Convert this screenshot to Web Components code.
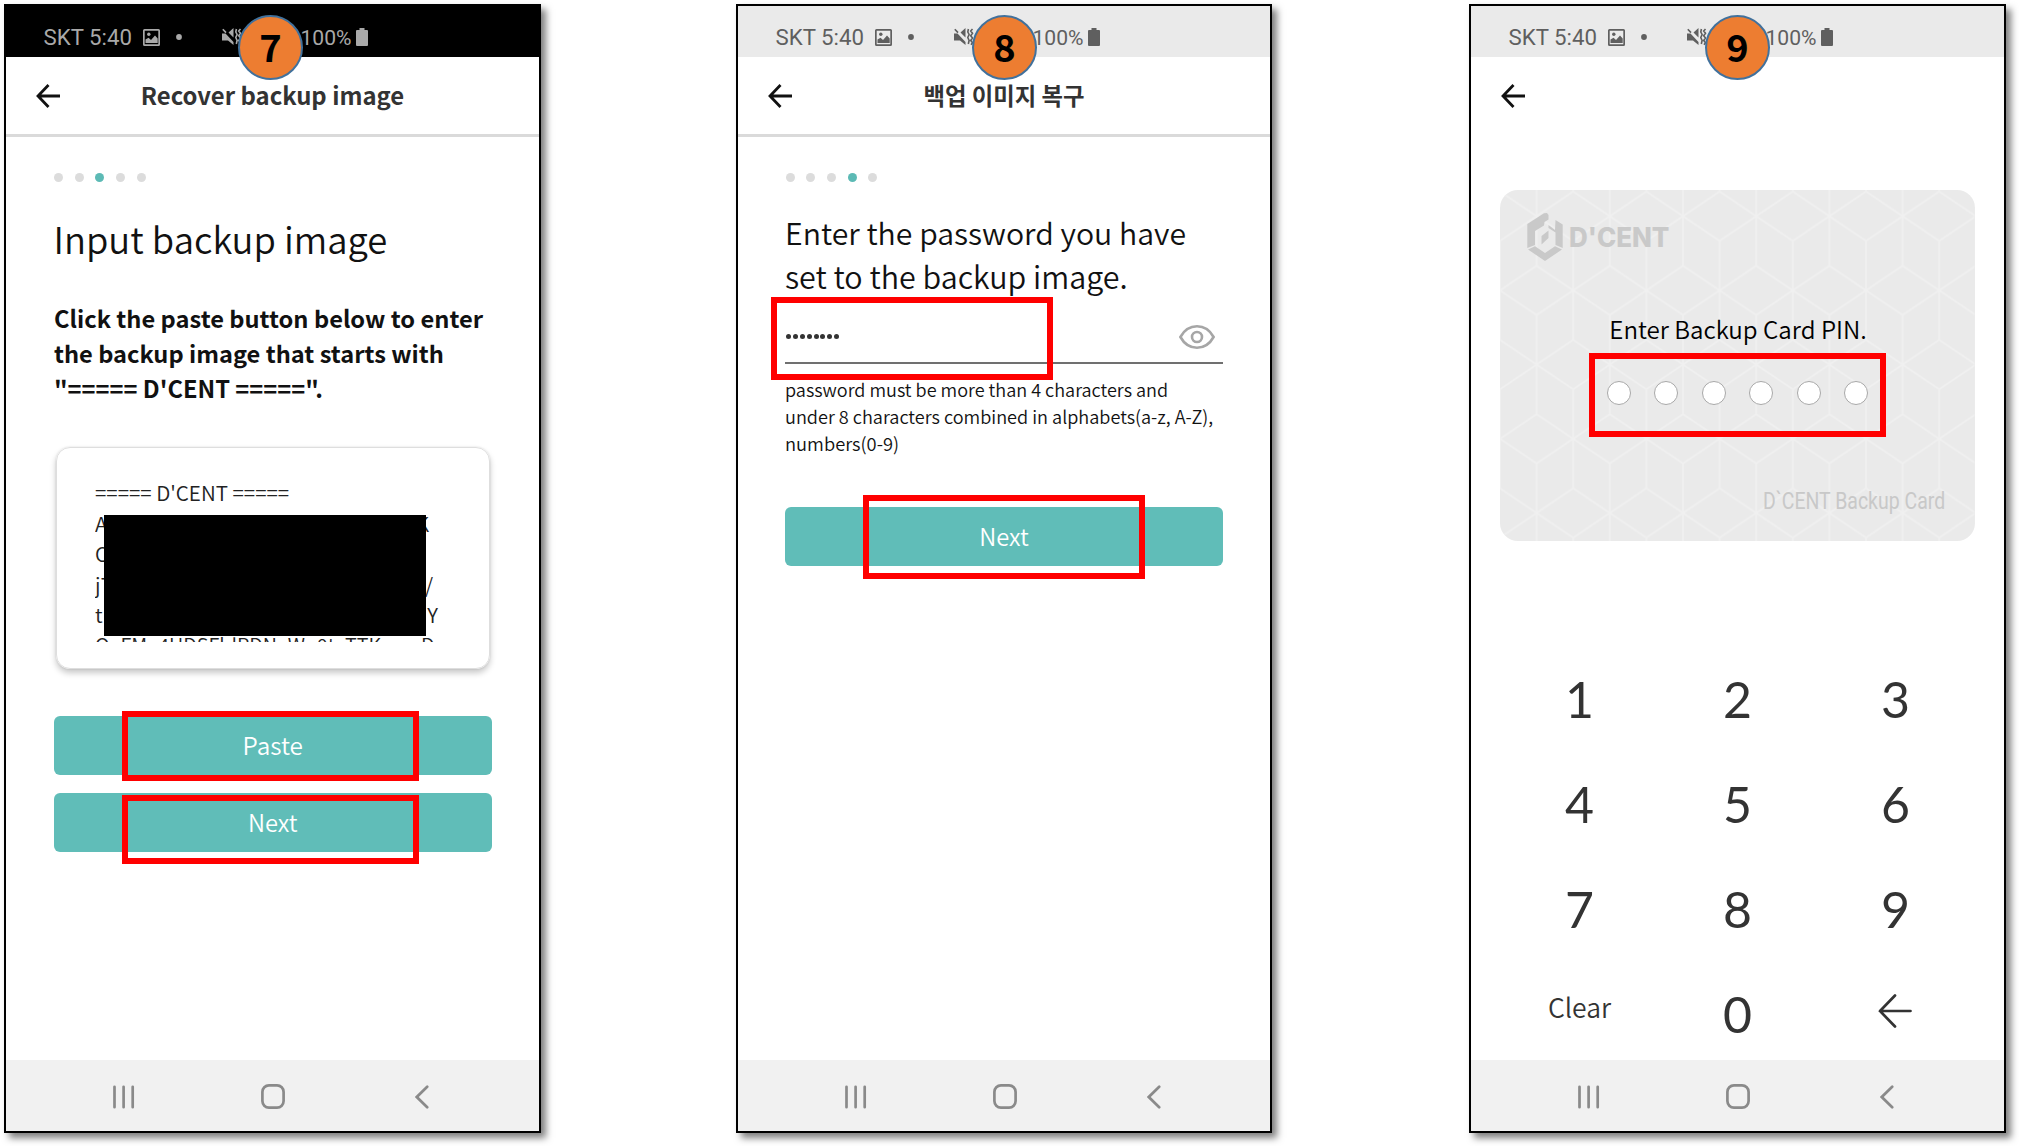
<!DOCTYPE html>
<html lang="en">
<head>
<meta charset="utf-8">
<title>Backup recovery steps 7-9</title>
<style>
  html, body { margin: 0; background: #fff; }
  body { width: 2019px; height: 1146px; overflow: hidden; font-family: "Noto Sans CJK KR", sans-serif; color: #111; }
</style>
</head>
<body>
<step-board></step-board>
<script>
const CJK = '"Noto Sans CJK KR", sans-serif';
const define = (name, html, setup) => {
  const template = document.createElement('template');
  template.innerHTML = html.trim();
  customElements.define(name, class extends HTMLElement {
    connectedCallback() {
      if (this.shadowRoot) return;
      this.attachShadow({ mode: 'open' }).append(template.content.cloneNode(true));
      if (setup) setup.call(this, this.shadowRoot);
    }
  });
};

/* One line of text, sized so that its ink spans `w` pixels.
   With `stretch`, the font size is kept and the line is scaled sideways. */
const ctx = document.createElement('canvas').getContext('2d');
define('text-line', `<style>
    :host { display: block; white-space: nowrap; }
    span { display: block; width: max-content; transform-origin: var(--origin, left) center; }
  </style><span><slot></slot></span>`, function (root) {
  const w = +this.getAttribute('w');
  if (!w) return;
  const cs = getComputedStyle(this);
  const base = parseFloat(cs.fontSize);
  ctx.font = `${cs.fontWeight} ${base}px ${cs.fontFamily}`;
  const m = ctx.measureText(this.textContent);
  const ratio = w / (m.actualBoundingBoxRight + m.actualBoundingBoxLeft);
  if (this.hasAttribute('stretch')) root.querySelector('span').style.transform = `scaleX(${ratio})`;
  else this.style.fontSize = base * ratio + 'px';
});

define('status-bar', `
  <style>
    :host { display: flex; align-items: center; box-sizing: border-box; height: 51px; padding: 11px 0 0 37.500px;
      background: #eaeaea; color: #5f5f5f; font-family: Roboto, sans-serif; }
    :host([dark]) { background: #000; color: #a9a9a9; }
    text-line { font-size: 22px; line-height: 41px; }
    .time { width: 99px; }
    svg { display: block; fill: currentColor; }
    .mute { margin-left: 40px; }
    .pct { margin-left: 58.500px; width: 55px; }
  </style>
  <text-line class="time" w="88.500">SKT 5:40</text-line>
  <svg width="17" height="17" viewBox="0 0 17 17"><path fill-rule="evenodd" d="M1.500 0h14A1.500 1.500 0 0 1 17 1.500v14a1.500 1.500 0 0 1-1.500 1.500h-14A1.500 1.500 0 0 1 0 15.500v-14A1.500 1.500 0 0 1 1.500 0zM1.700 1.700v13.600h13.600V1.700z"/><path d="M2.500 14V10.500L5.500 8.800 8 11l4-4.500 2.700 3V14z"/><circle cx="5.800" cy="5.200" r="1.700"/></svg>
  <svg width="6" height="6" viewBox="0 0 6 6" style="margin-left:16.500px"><circle cx="3" cy="3" r="2.900"/></svg>
  <svg class="mute" width="20" height="18" viewBox="0 0 20 18"><path d="M0 5.500h3.500L11.500 14v3L6 12.500H0zM6.500 4.500 11.500 0v9.500z"/><path d="M.8 1.200 4 4.600M18.500 1l-1.800 2 1.800 2.300-1.800 2.400L18.500 10l-1.800 2.400 1.800 2.300-1.500 2M14.400 1l-.6 3 1.300 2.500-1.300 3 1.300 3-.8 3.500" fill="none" stroke="currentColor" stroke-width="1.600"/></svg>
  <text-line class="pct" w="50">100%</text-line>
  <svg width="12" height="18" viewBox="0 0 12 18"><path d="M3.500 0h5v2H11a1 1 0 0 1 1 1v14a1 1 0 0 1-1 1H1a1 1 0 0 1-1-1V3a1 1 0 0 1 1-1h2.500z"/></svg>
`);

define('app-header', `
  <style>
    :host { display: grid; grid-template-columns: 80px 1fr 80px; align-items: center; box-sizing: border-box;
      height: 80px; border-bottom: 3px solid transparent; color: #333; }
    :host([ruled]) { border-color: #dadada; }
    svg { margin-left: 29.500px; display: block; }
    .t { display: flex; justify-content: center; font: bold 23px/76px ${CJK}; padding-bottom: 2px; }
  </style>
  <svg width="24" height="24" viewBox="0 0 24 24" fill="none" stroke="#111" stroke-width="2.800"><path d="M12.500 1 2 12l10.500 11M2 12h22"/></svg>
  <div class="t"><slot></slot></div>
`);

define('step-dots', `
  <style>
    :host { display: flex; gap: 11.700px; height: 9px; padding-left: .5px; }
    i { width: 9px; height: 9px; border-radius: 50%; background: #dcdcdc; }
    i.on { background: #5cbab5; }
  </style>`, function (root) {
  for (let n = 1; n <= 5; n++) {
    const dot = document.createElement('i');
    if (n === +this.getAttribute('current')) dot.className = 'on';
    root.append(dot);
  }
});

define('app-button', `
  <style>
    :host { display: flex; justify-content: center; height: 59px; border-radius: 6px; background: #60bdb8;
      color: #fff; font: 350 23px/57px ${CJK}; }
  </style><slot></slot>`);

define('nav-bar', `
  <style>
    :host { display: flex; align-items: center; box-sizing: border-box; height: 71px; background: #f1f1f1; padding: 2px 0 0 107px; }
    svg { display: block; fill: none; stroke: #8a8a8a; stroke-width: 2.700; stroke-linecap: round; }
  </style>
  <svg width="22" height="24" viewBox="0 0 22 24"><path d="M1.500 1.800v20.400M10.600 1.800v20.400M19.700 1.800v20.400"/></svg>
  <svg width="24" height="25" viewBox="0 0 24 25" style="margin-left:125.500px"><rect x="1.400" y="1.400" width="21.200" height="22.200" rx="6.500"/></svg>
  <svg width="14" height="24" viewBox="0 0 14 24" style="margin-left:130px"><path d="M12.200 1.800 1.800 12l10.400 10.200"/></svg>
`);

/* Numbered badge over the status bar. */
define('step-badge', `
  <style>
    :host { position: absolute; top: 9px; width: 65px; height: 65px; box-sizing: border-box; border: 2px solid #41719c;
      border-radius: 50%; background: #ed7d31; color: #000; text-align: center; font: bold 38px/58px ${CJK}; }
  </style><slot></slot>`);

/* Red annotation frame over the screen. */
define('mark-box', `
  <style>:host { position: absolute; box-sizing: border-box; border: 6px solid #f00; }</style>`, function () {
  const [x, y, w, h] = this.getAttribute('box').split(' ');
  Object.assign(this.style, { left: x + 'px', top: y + 'px', width: w + 'px', height: h + 'px' });
});

define('phone-frame', `
  <style>
    :host { position: relative; display: flex; flex-direction: column; box-sizing: border-box; height: 1129px;
      border: 2px solid #000; background: #fff; box-shadow: 5px 5px 7px rgba(0,0,0,.5); }
    main { flex: 1; min-height: 0; }
  </style>
  <slot name="status"></slot><slot name="header"></slot>
  <main><slot></slot></main>
  <nav-bar></nav-bar><slot name="over"></slot>`);

define('import-screen', `
  <style>
    :host { display: block; padding: 36px 47px 0 47.500px; }
    h1, p { margin: 0; }
    h1 { margin-top: 31px; font: 350 35px/50px ${CJK}; }
    p { margin-top: 38px; padding-left: .5px; font: bold 23.500px/35px ${CJK}; }
    .card { box-sizing: border-box; position: relative; margin: 41px 2px 0; height: 222px; border: 1.500px solid #dedede; border-radius: 14px;
      box-shadow: 0 4px 6px rgba(0,0,0,.22), 0 0 2px rgba(0,0,0,.12); padding: 29px 50px 0 38.500px; }
    .data { height: 165px; overflow: hidden; font: 350 20.500px/30.500px ${CJK}; color: #222; }
    .row { display: flex; justify-content: space-between; height: 30.500px; }
    .mask { position: absolute; left: 47.500px; top: 67px; width: 322px; height: 121px; background: #000; }
    app-button { margin-top: 18px; }
    .card + app-button { margin-top: 47px; }
  </style>
  <step-dots current="3"></step-dots>
  <h1><text-line w="329.500">Input backup image</text-line></h1>
  <p><text-line w="429">Click the paste button below to enter</text-line><text-line w="389">the backup image that starts with</text-line><text-line w="265.500">"===== D'CENT =====".</text-line></p>
  <div class="card">
    <div class="data">
      <text-line w="194">===== D'CENT =====</text-line>
      <div class="row" style="width:334px"><span>A</span><span>K</span></div>
      <div class="row"><span>O</span></div>
      <div class="row" style="width:338px"><span>j7</span><span>/</span></div>
      <div class="row" style="width:343px"><span>t</span><span>Y</span></div>
      <text-line w="338">QeFMa4UDSFldPDNeWo0taTTKemaD</text-line>
    </div>
    <div class="mask"></div>
  </div>
  <app-button><text-line w="57.500">Paste</text-line></app-button>
  <app-button><text-line w="48">Next</text-line></app-button>
`);

define('password-screen', `
  <style>
    :host { display: block; padding: 36px 47px 0; }
    h1, p { margin: 0; }
    h1 { margin-top: 29px; font: 350 30.500px/43.700px ${CJK}; }
    .field { display: flex; align-items: center; justify-content: space-between; box-sizing: border-box; height: 65.600px;
      padding: 13px 8.500px 0 1px; border-bottom: 2px solid #707070; }
    .pw { display: flex; gap: 1.900px; }
    .pw i { width: 5px; height: 5px; border-radius: 50%; background: #333; }
    p { margin-top: 12px; font: 350 18.500px/26.800px ${CJK}; color: #111; }
    app-button { margin-top: 50.600px; }
  </style>
  <step-dots current="4"></step-dots>
  <h1><text-line w="397.500">Enter the password you have</text-line><text-line w="339.500">set to the backup image.</text-line></h1>
  <div class="field">
    <div class="pw"><i></i><i></i><i></i><i></i><i></i><i></i><i></i><i></i></div>
    <svg width="36" height="24" viewBox="0 0 36 24" fill="none" stroke="#a6a6a6" stroke-width="2.600"><path d="M1.400 12C5 5.500 11 1.300 18 1.300S31 5.500 34.600 12C31 18.500 25 22.700 18 22.700S5 18.500 1.400 12z"/><circle cx="18" cy="12" r="5"/></svg>
  </div>
  <p><text-line w="381">password must be more than 4 characters and</text-line><text-line w="426.500">under 8 characters combined in alphabets(a-z, A-Z),</text-line><text-line w="112">numbers(0-9)</text-line></p>
  <app-button><text-line w="48">Next</text-line></app-button>
`);

define('backup-card', `
  <style>
    :host { position: relative; display: flex; flex-direction: column; box-sizing: border-box; height: 351px; overflow: hidden;
      border-radius: 18px; background: #eaeaea; }
    .bg { position: absolute; inset: 0; width: 100%; height: 100%; }
    .brand, .ask, .pins, .name { position: relative; }
    .brand { display: flex; align-items: center; gap: 6px; padding: 23px 0 0 26.500px; height: 48px; color: #c9c9c9; }
    .brand text-line { font: 800 26.500px/48px Inter, sans-serif; }
    .ask { display: flex; justify-content: center; padding-left: 1px; margin-top: 43.500px; font: 350 24px/48px ${CJK}; color: #000; }
    .pins { display: flex; justify-content: center; gap: 23.400px; margin-top: 28.500px; }
    .pins i { box-sizing: border-box; width: 24px; height: 24px; border: 1.500px solid #a8a8a8; border-radius: 50%; background: #fff; }
    .name { --origin: right; display: flex; justify-content: flex-end; margin: 77px 29.500px 0 0; font: 400 23px/40px Roboto, sans-serif; color: #c8c8c8; }
  </style>
  <svg class="bg"><defs><pattern id="iso" x="0" y="-48" width="73.200" height="148.400" patternUnits="userSpaceOnUse">
    <path d="M36.600 24.700V123.700M0 49.500l73.200 49.400M73.200 49.500 0 98.900M0 -49.500V49.500M73.200-49.500V49.500M0 98.900V197.900M73.200 98.900V197.900M0 0l36.600 24.700L73.200 0M0 148.400l36.600-24.700 36.600 24.700" fill="none" stroke="#f0f0f0" stroke-width="1.700"/></pattern></defs>
    <rect width="100%" height="100%" fill="url(#iso)"/></svg>
  <div class="brand">
    <svg width="36" height="48" viewBox="0 0 36 48" fill="currentColor"><path d="M17 .3 20 0 21.500 2V6.500L17.500 9 17 12.500 8 18V32L.3 35V11z"/><path d="M28.500 7 35.700 11.500V35L28.500 32V19.500L21.500 15V12L28 17z" /><path d="M1 36.500 8 33.300 18 40 28 33.300 35 36.500 18 48z"/><path d="M21.500 17.500V25L14.500 31.500V23z"/></svg>
    <text-line w="99.500" stretch>D'CENT</text-line>
  </div>
  <div class="ask"><text-line w="254">Enter Backup Card PIN.</text-line></div>
  <div class="pins"><i></i><i></i><i></i><i></i><i></i><i></i></div>
  <div class="name"><text-line w="181" stretch>D\`CENT Backup Card</text-line></div>
`);

define('pin-screen', `
  <style>
    :host { display: block; padding: 53px 29.200px 0; }
    .keys { display: grid; grid-template-columns: repeat(3, 158px); grid-auto-rows: 105px; justify-content: center; margin-top: 106px;
      font: 400 50px/105px Lato, sans-serif; color: #333; text-align: center; }
    .clear { display: flex; justify-content: center; font: 350 27px/90px ${CJK}; }
    .del { display: block; margin: 32px auto 0 61px; }
  </style>
  <backup-card></backup-card>
  <div class="keys">
    <span>1</span><span>2</span><span>3</span><span>4</span><span>5</span><span>6</span><span>7</span><span>8</span><span>9</span>
    <div class="clear"><text-line w="63">Clear</text-line></div><span>0</span>
    <svg class="del" width="34" height="34" viewBox="0 0 34 34" fill="none" stroke="#333" stroke-width="2.700" stroke-linecap="round"><path d="M17 1.500 2 17l15 15.500M2 17h30.500"/></svg>
  </div>
`);

define('step-board', `
  <style>
    :host { display: flex; padding: 4px 0 0 4px; }
    .a { width: 537px; } .b { width: 536px; margin-left: 195px; } .c { width: 537px; margin-left: 197px; }
  </style>
  <phone-frame class="a">
    <status-bar slot="status" dark></status-bar>
    <app-header slot="header" ruled><text-line w="261">Recover backup image</text-line></app-header>
    <import-screen></import-screen>
    <mark-box slot="over" box="116 705 297 70"></mark-box>
    <mark-box slot="over" box="116 789 297 69"></mark-box>
    <step-badge slot="over" style="left:232px">7</step-badge>
  </phone-frame>
  <phone-frame class="b">
    <status-bar slot="status"></status-bar>
    <app-header slot="header" ruled><text-line w="160">백업 이미지 복구</text-line></app-header>
    <password-screen></password-screen>
    <mark-box slot="over" box="33 291 282 83"></mark-box>
    <mark-box slot="over" box="125 489 282 84"></mark-box>
    <step-badge slot="over" style="left:234px">8</step-badge>
  </phone-frame>
  <phone-frame class="c">
    <status-bar slot="status"></status-bar>
    <app-header slot="header"></app-header>
    <pin-screen></pin-screen>
    <mark-box slot="over" box="118 347 297 84"></mark-box>
    <step-badge slot="over" style="left:234px">9</step-badge>
  </phone-frame>
`);
</script>
</body>
</html>
